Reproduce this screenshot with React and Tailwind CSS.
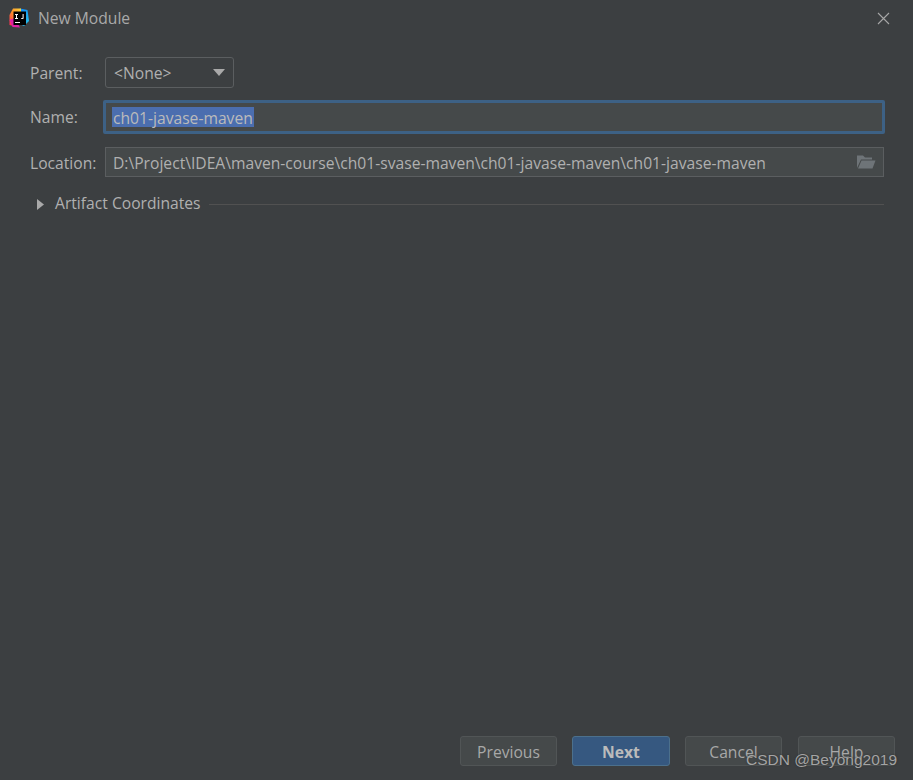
import React from "react";

function Logo() {
  return (
    <svg width="20" height="20" viewBox="0 0 20 20" className="shrink-0">
      <defs>
        <linearGradient id="a" x1="0" y1="1" x2="1" y2="0">
          <stop offset="0" stopColor="#fe2857" />
          <stop offset="0.5" stopColor="#fe8c2a" />
          <stop offset="1" stopColor="#fdd83a" />
        </linearGradient>
        <linearGradient id="b" x1="0" y1="0" x2="1" y2="1">
          <stop offset="0" stopColor="#087cfa" />
          <stop offset="1" stopColor="#27c5e8" />
        </linearGradient>
      </defs>
      <path d="M11 0.5 L18.5 2 L20 13 L15 18 L8 15 Z" fill="url(#b)" />
      <path d="M0.5 7 L4 0.5 L12 0.5 L12 8 L5 18 L0.5 17 Z" fill="url(#a)" />
      <path d="M0.5 12 L3.5 19 L11 19.5 L6 10 Z" fill="#dd1fa4" />
      <rect x="4.5" y="3.5" width="12.5" height="13.5" fill="#000" />
      <rect x="6" y="14" width="5" height="1" fill="#fff" />
      <path d="M6 6h3v.9h-1v3.2h1v.9h-3v-.9h1v-3.2h-1zM14.6 6v3.9c0 .8-.6 1.2-1.4 1.2-.6 0-1.1-.2-1.4-.6l.6-.6c.2.2.4.3.7.3.3 0 .5-.1.5-.4V6z" fill="#fff" />
    </svg>
  );
}

function Btn({ children, primary, className }) {
  return (
    <div
      className={
        "h-[30px] flex items-center justify-center rounded-[3px] border text-[15.65px] " +
        (primary
          ? "bg-[#365880] border-[#4c708c] text-[#bbbbbb] font-bold "
          : "bg-[#45494a] border-[#515556] text-[#a8a8a8] ") +
        className
      }
    >
      <span className="pt-[3px]">{children}</span>
    </div>
  );
}

export default function App() {
  return (
    <div
      className="relative w-[913px] h-[780px] bg-[#3c3f41] flex flex-col overflow-hidden text-[15.65px] text-[#b0b0b0]"
      style={{ fontFamily: '"Open Sans", "Noto Sans", sans-serif' }}
    >
      <div className="h-[36px] flex items-center pl-[9px] pr-[23px] shrink-0">
        <Logo />
        <span className="ml-[9px] pt-[2px] text-[#a9a9a9]">New Module</span>
        <svg width="13" height="13" viewBox="0 0 13 13" className="ml-auto" stroke="#a7a7a7" strokeWidth="1.1" fill="none">
          <path d="M1 1 L12 12 M12 1 L1 12" />
        </svg>
      </div>

      <div className="flex flex-col pl-[30px] pr-[29px] mt-[21px]">
        <div className="flex items-center h-[30px]">
          <span className="w-[75px] pt-[3px]">Parent:</span>
          <div className="w-[129px] h-[31px] flex items-center border border-[#5b5e60] rounded-[3px] pl-[8px] pr-[8px]">
            <span className="pt-[3px]">&lt;None&gt;</span>
            <svg width="12" height="7" viewBox="0 0 12 7" className="ml-auto" fill="#a9a9a9">
              <path d="M0 0 H12 L6 7 Z" />
            </svg>
          </div>
        </div>

        <div className="flex items-center h-[34px] mt-[13px]">
          <span className="w-[73px] pt-[2px]">Name:</span>
          <div className="flex-1 h-[34px] -mr-px flex items-center bg-[#45494a] border-[3px] border-[#3d6185] rounded-[2px] pl-[6px]">
            <span className="bg-[#4b6eaf] text-[#bbbbbb] h-[20px] leading-[22px] pl-[1px] pr-[1px]">ch01-javase-maven</span>
          </div>
        </div>

        <div className="flex items-center h-[30px] mt-[13px]">
          <span className="w-[75px] pt-[3px]">Location:</span>
          <div className="flex-1 h-[30px] flex items-center bg-[#45494a] border border-[#5b5e60] pl-[7px] pr-[7px]">
            <span className="whitespace-nowrap pt-[3px]">D:\Project\IDEA\maven-course\ch01-svase-maven\ch01-javase-maven\ch01-javase-maven</span>
            <svg width="20" height="16" viewBox="0 0 20 16" className="ml-auto" fill="#6e7478">
              <path d="M1 14 V1.5 H7 L9 3.5 H16 V5.5 H5 L1 14 Z" />
              <path d="M5.5 6.5 H19.5 L16.5 14.5 H2 Z" />
            </svg>
          </div>
        </div>

        <div className="flex items-center h-[20px] mt-[17px]">
          <svg width="8" height="11" viewBox="0 0 8 11" className="ml-[7px]" fill="#a9a9a9">
            <path d="M0 0 L7 5.5 L0 11 Z" />
          </svg>
          <span className="ml-[10px]">Artifact Coordinates</span>
          <div className="flex-1 h-px bg-[#515151] ml-[8px]" />
        </div>
      </div>

      <div className="mt-auto mb-[14px] flex justify-end pr-[18px]">
        <Btn className="w-[97px]">Previous</Btn>
        <Btn primary className="w-[98px] ml-[15px]">Next</Btn>
        <Btn className="w-[97px] ml-[15px]">Cancel</Btn>
        <Btn className="w-[97px] ml-[16px]">Help</Btn>
      </div>

      <span
        className="absolute left-[746px] top-[750px] text-[15.5px] leading-[20px] text-[#a4a4a4] whitespace-nowrap"
        style={{ fontFamily: '"Liberation Sans", sans-serif', textShadow: "0 0 2px #2a2a2a" }}
      >
        CSDN @Beyong2019
      </span>
    </div>
  );
}
